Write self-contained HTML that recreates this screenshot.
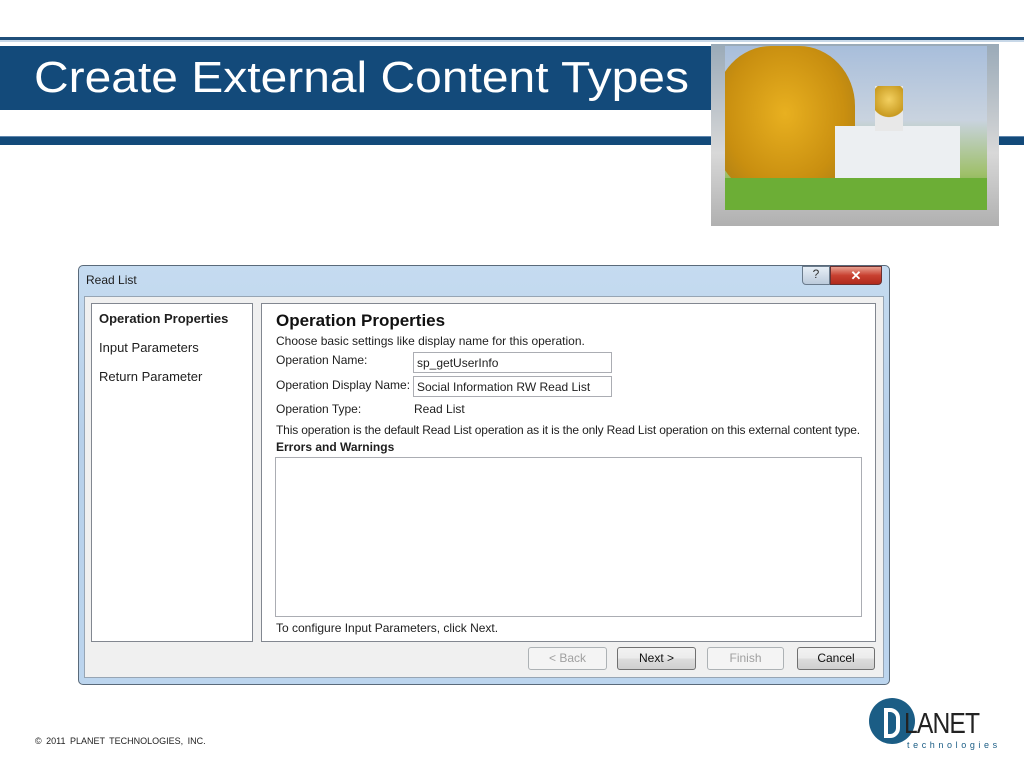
<!DOCTYPE html><html><head><style>
body{margin:0;width:1024px;height:768px;position:relative;background:#fff;font-family:"Liberation Sans",sans-serif;overflow:hidden}
div{position:absolute;box-sizing:border-box}
.t{font-size:12px;color:#1e1e1e;white-space:nowrap}
.btn{top:647px;height:23px;border:1px solid #707070;border-radius:3px;background:linear-gradient(#f2f2f2,#ebebeb 50%,#dddddd 51%,#cfcfcf);font-size:12px;text-align:center;line-height:21px;color:#111}
.dis{border-color:#adb2b5;background:#f4f4f4;color:#a0a0a0}
</style></head><body>
<div style="left:0;top:37px;width:1024px;height:3px;background:#1f4e79"></div>
<div style="left:0;top:40px;width:1024px;height:2px;background:#c8d8e8"></div>
<div style="left:0;top:46px;width:712px;height:64px;background:#134a7a"></div>
<div style="left:34px;top:53px;color:#fff;font-size:44px;white-space:nowrap;transform:scaleX(1.09);transform-origin:left">Create External Content Types</div>
<div style="left:0;top:136px;width:1024px;height:9px;background:#134a7a;border-top:1px solid #5f86ad"></div>
<div style="left:711px;top:44px;width:288px;height:182px;background:linear-gradient(#9aaab8,#d8d8d8 60%,#b0b0b0)"></div>
<div style="left:725px;top:46px;width:262px;height:164px;background:linear-gradient(180deg,#a8bedb 0%,#c9d3df 45%,#9fc06a 78%,#5d9a2e 100%);overflow:hidden">
<div style="left:-10px;top:0;width:140px;height:150px;border-radius:40%;background:radial-gradient(ellipse at 50% 45%,#e8b020,#c98f10 60%,#a07818)"></div>
<div style="left:110px;top:80px;width:125px;height:55px;background:#eceff2"></div>
<div style="left:150px;top:40px;width:28px;height:45px;background:radial-gradient(circle at 50% 30%,#f3d060,#c89a20 50%,#e8e8e8 52%)"></div>
<div style="left:0;top:132px;width:262px;height:32px;background:#6cae36"></div>
</div>
<div style="left:78px;top:265px;width:812px;height:420px;border:1px solid #5a6a7a;border-radius:5px;background:linear-gradient(#c5dbf0,#b7d0ea 40%,#bcd5ee)"></div>
<div class="t" style="left:86px;top:273px;font-size:12px">Read List</div>
<div style="left:802px;top:266px;width:28px;height:19px;border:1px solid #6a7b8c;border-radius:0 0 0 4px;background:linear-gradient(#e6eef6,#bccbdb);font-size:12px;text-align:center;color:#333">?</div>
<div style="left:830px;top:266px;width:52px;height:19px;border:1px solid #6a3030;border-radius:0 0 4px 0;background:linear-gradient(#e8a090,#c84030 50%,#b02a1c);color:#fff;font-weight:bold;font-size:13px;text-align:center;line-height:18px">✕</div>
<div style="left:84px;top:296px;width:800px;height:382px;background:#f0f0f0;border:1px solid #97a5b4"></div>
<div style="left:91px;top:303px;width:162px;height:339px;background:#fff;border:1px solid #828790"></div>
<div class="t" style="left:99px;top:311px;font-size:13px;font-weight:bold">Operation Properties</div>
<div class="t" style="left:99px;top:340px;font-size:13px">Input Parameters</div>
<div class="t" style="left:99px;top:369px;font-size:13px">Return Parameter</div>
<div style="left:261px;top:303px;width:615px;height:339px;background:#fff;border:1px solid #828790"></div>
<div class="t" style="left:276px;top:311px;font-size:17px;font-weight:bold;color:#111">Operation Properties</div>
<div class="t" style="left:276px;top:334px">Choose basic settings like display name for this operation.</div>
<div class="t" style="left:276px;top:353px">Operation Name:</div>
<div style="left:413px;top:352px;width:199px;height:21px;border:1px solid #abadb3"></div>
<div class="t" style="left:417px;top:356px">sp_getUserInfo</div>
<div class="t" style="left:276px;top:378px">Operation Display Name:</div>
<div style="left:413px;top:376px;width:199px;height:21px;border:1px solid #abadb3"></div>
<div class="t" style="left:417px;top:380px">Social Information RW Read List</div>
<div class="t" style="left:276px;top:402px">Operation Type:</div>
<div class="t" style="left:414px;top:402px">Read List</div>
<div class="t" style="left:276px;top:423px;letter-spacing:-0.15px">This operation is the default Read List operation as it is the only Read List operation on this external content type.</div>
<div class="t" style="left:276px;top:440px;font-weight:bold">Errors and Warnings</div>
<div style="left:275px;top:457px;width:587px;height:160px;border:1px solid #abadb3"></div>
<div class="t" style="left:276px;top:621px">To configure Input Parameters, click Next.</div>
<div class="btn dis" style="left:528px;width:79px">&lt; Back</div>
<div class="btn" style="left:617px;width:79px">Next &gt;</div>
<div class="btn dis" style="left:707px;width:77px">Finish</div>
<div class="btn" style="left:797px;width:78px">Cancel</div>
<div style="left:35px;top:736px;font-size:9px;color:#222;word-spacing:2px">© 2011 PLANET TECHNOLOGIES, INC.</div>
<div style="left:869px;top:698px;width:46px;height:46px;border-radius:50%;background:#1b5d85"></div>
<div style="left:884px;top:708px;width:16px;height:30px;border:4px solid #fff;border-radius:0 10px 10px 0"></div>
<div style="left:904px;top:708px;font-size:29px;color:#222;letter-spacing:-1px;transform:scaleX(.85);transform-origin:left">LANET</div>
<div style="left:907px;top:740px;font-size:9px;color:#1b5d85;letter-spacing:3.6px">technologies</div>
</body></html>
